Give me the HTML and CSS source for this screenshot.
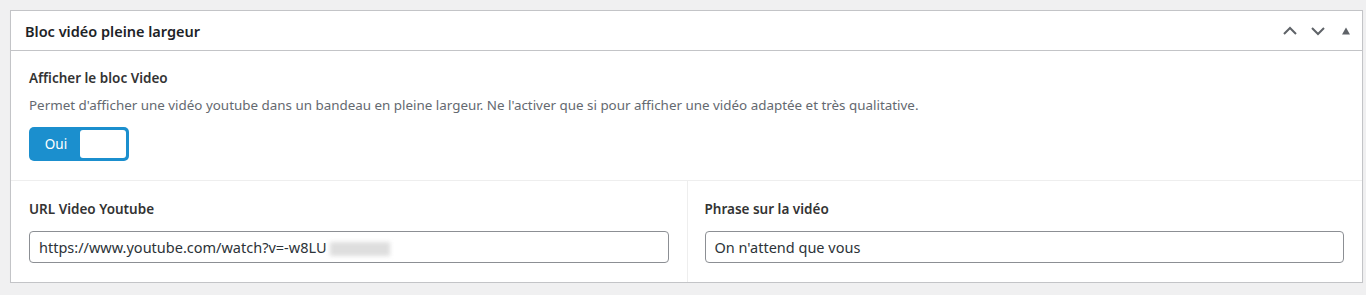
FILE: index.html
```html
<!DOCTYPE html>
<html lang="fr">
<head>
<meta charset="utf-8">
<title>Bloc vidéo pleine largeur</title>
<link rel="stylesheet" href="styles.css">
</head>
<body>
<div class="postbox">
  <div class="postbox-header">
    <h2 class="hndle">Bloc vidéo pleine largeur</h2>
    <div class="handle-actions">
      <button class="handle-btn" aria-label="Monter">
        <svg width="16" height="16" viewBox="0 0 16 16"><path d="M2 11 L8 5 L14 11" fill="none" stroke="#5f6368" stroke-width="2"/></svg>
      </button>
      <button class="handle-btn" aria-label="Descendre">
        <svg width="16" height="16" viewBox="0 0 16 16"><path d="M2 5 L8 11 L14 5" fill="none" stroke="#5f6368" stroke-width="2"/></svg>
      </button>
      <button class="handle-btn small" aria-label="Replier">
        <svg width="10" height="10" viewBox="0 0 10 10"><path d="M5 1.5 L9 8.5 L1 8.5 Z" fill="#5f6368"/></svg>
      </button>
    </div>
  </div>
  <div class="inside">
    <div class="field">
      <label class="field-label">Afficher le bloc Video</label>
      <p class="desc">Permet d'afficher une vidéo youtube dans un bandeau en pleine largeur. Ne l'activer que si pour afficher une vidéo adaptée et très qualitative.</p>
      <div class="switch">
        <span class="switch-on">Oui</span>
        <span class="switch-slider"></span>
      </div>
    </div>
    <div class="field-row">
      <div class="field half">
        <label class="field-label">URL Video Youtube</label>
        <div class="input">https://www.youtube.com/watch?v=-w8LU<span class="blur"></span></div>
      </div>
      <div class="field half divider">
        <label class="field-label">Phrase sur la vidéo</label>
        <div class="input">On n'attend que vous</div>
      </div>
    </div>
  </div>
</div>
</body>
</html>
```

FILE: styles.css
```css
html, body {
  margin: 0;
  padding: 0;
  background: #f0f0f1;
}
body {
  padding: 10px 3px 0 10px;
  font-family: "Noto Sans", "Open Sans", sans-serif;
  color: #1d2327;
  font-size: 13px;
}
.postbox {
  background: #fff;
  border: 1px solid #c3c4c7;
  box-shadow: 0 1px 1px rgba(0,0,0,0.04);
}
.postbox-header {
  height: 39px;
  border-bottom: 1px solid #c3c4c7;
  display: flex;
  align-items: center;
  justify-content: space-between;
  padding: 0 2px 0 14px;
}
.hndle {
  margin: 0;
  font-size: 14.5px;
  font-weight: 600;
  color: #1d2327;
}
.handle-actions {
  display: flex;
  align-items: center;
}
.handle-btn {
  border: 0;
  background: none;
  padding: 0;
  width: 28px;
  height: 36px;
  display: flex;
  align-items: center;
  justify-content: center;
}
.handle-btn.small {
  width: 28px;
}
.field {
  padding: 18px 18px 19px 18px;
}
.field-label {
  display: block;
  font-weight: 600;
  font-size: 13.5px;
  color: #333;
  line-height: 18px;
  margin-bottom: 9px;
}
.desc {
  margin: 0 0 13px;
  color: #646970;
  font-size: 13.4px;
  line-height: 18px;
}
.switch {
  display: inline-flex;
  align-items: center;
  width: 94px;
  height: 28px;
  padding: 3px;
  background: #1b8fce;
  border-radius: 5px;
  vertical-align: top;
}
.switch-on {
  color: #fff;
  width: 48px;
  text-align: center;
  font-size: 13.5px;
}
.switch-slider {
  width: 46px;
  height: 28px;
  background: #fff;
  border-radius: 3px;
}
.field-row {
  display: flex;
  border-top: 1px solid #eeeeee;
}
.half {
  flex: 1 1 0;
  padding: 19px 18px 19px 18px;
}
.divider {
  border-left: 1px solid #eeeeee;
  padding-left: 17px;
}
.half .field-label {
  margin-bottom: 13px;
}
.input {
  box-sizing: border-box;
  height: 32px;
  border: 1px solid #8c8f94;
  border-radius: 4px;
  padding: 0 9px;
  font-size: 14.5px;
  line-height: 30px;
  color: #2c3338;
  white-space: nowrap;
  overflow: hidden;
}
.blur {
  display: inline-block;
  vertical-align: middle;
  width: 60px;
  height: 14px;
  margin-left: 3px;
  background: #dedede;
  filter: blur(2px);
}
```
